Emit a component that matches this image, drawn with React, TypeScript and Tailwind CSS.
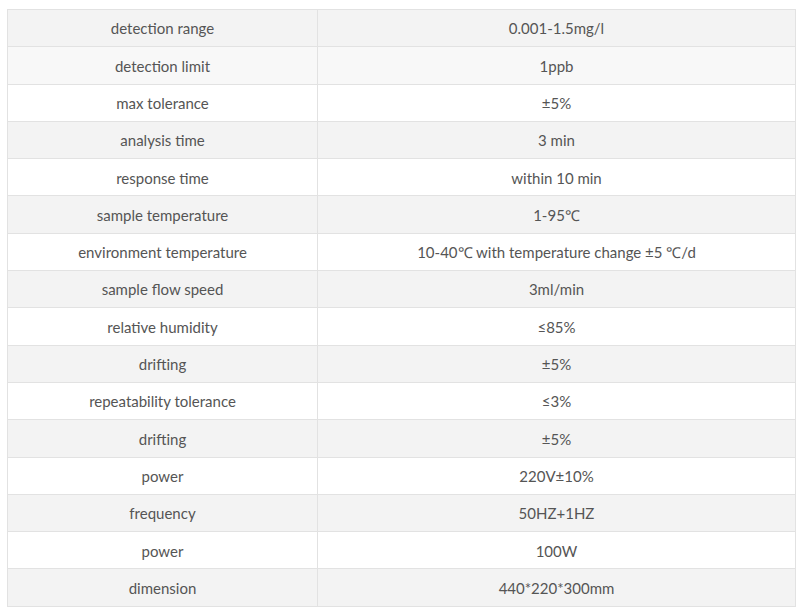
const rows: [string, string][] = [
  ['detection range', '0.001-1.5mg/l'],
  ['detection limit', '1ppb'],
  ['max tolerance', '±5%'],
  ['analysis time', '3 min'],
  ['response time', 'within 10 min'],
  ['sample temperature', '1-95℃'],
  ['environment temperature', '10-40℃ with temperature change ±5 ℃/d'],
  ['sample flow speed', '3ml/min'],
  ['relative humidity', '≤85%'],
  ['drifting', '±5%'],
  ['repeatability tolerance', '≤3%'],
  ['drifting', '±5%'],
  ['power', '220V±10%'],
  ['frequency', '50HZ+1HZ'],
  ['power', '100W'],
  ['dimension', '440*220*300mm'],
]

const rowBg = (i: number) => {
  if (i === 0) return 'bg-[#f3f3f3]'
  if (i === 1) return 'bg-[#f8f8f8]'
  return i % 2 === 1 ? 'bg-[#f3f3f3]' : 'bg-white'
}

export default function App() {
  return (
    <div className="w-[800px] h-[611px] bg-white pt-[9px] pl-[7px] font-['Lato',sans-serif]">
      <table className="w-[789px] border-collapse text-[15px] text-[#555] table-fixed">
        <colgroup>
          <col className="w-[310px]" />
          <col />
        </colgroup>
        <tbody>
          {rows.map(([k, v], i) => (
            <tr key={i} className={`h-[37.3px] ${rowBg(i)}`}>
              <td className="border border-[#e2e2e2] text-center align-middle p-0 pt-[1px]">{k}</td>
              <td className="border border-[#e2e2e2] text-center align-middle p-0 pt-[1px]">{v}</td>
            </tr>
          ))}
        </tbody>
      </table>
    </div>
  )
}
